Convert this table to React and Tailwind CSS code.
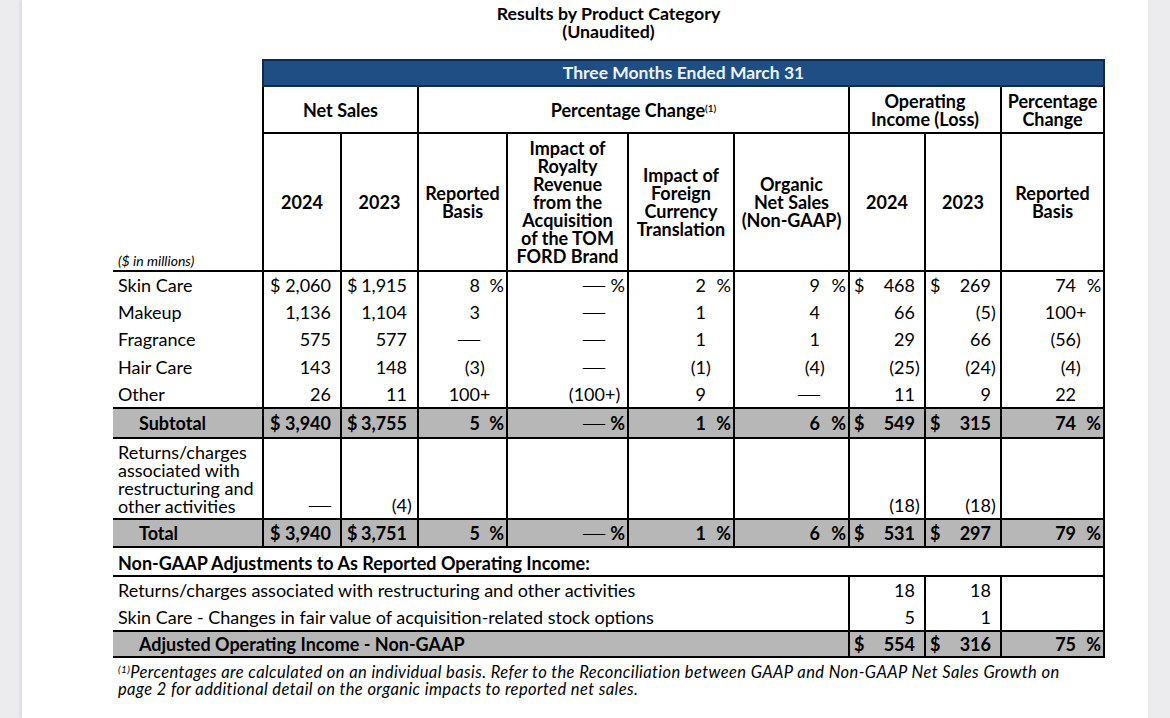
const COLS = [
  { w: 'w-[78px]', pl: 'pl-[6px]', pr: 'pr-[2px]', slot: 'w-[7px]' },
  { w: 'w-[77px]', pl: 'pl-[5px]', pr: 'pr-[3px]', slot: 'w-[7px]' },
  { w: 'w-[89px]', pl: 'pl-[2px]', pr: 'pr-[2px]', slot: 'w-[24px]' },
  { w: 'w-[121px]', pl: 'pl-[2px]', pr: 'pr-[2px]', slot: 'w-[20px]' },
  { w: 'w-[106px]', pl: 'pl-[2px]', pr: 'pr-[2px]', slot: 'w-[25px]' },
  { w: 'w-[115px]', pl: 'pl-[2px]', pr: 'pr-[2px]', slot: 'w-[26px]' },
  { w: 'w-[76px]', pl: 'pl-[4px]', pr: 'pr-[2px]', slot: 'w-[7px]' },
  { w: 'w-[76px]', pl: 'pl-[4px]', pr: 'pr-[2px]', slot: 'w-[7px]' },
  { w: 'w-[103px]', pl: 'pl-[2px]', pr: 'pr-[2px]', slot: 'w-[25px]' },
]

const rows = [
  ['Skin Care', ['$ 2,060', '$ 1,915', '8 %', '— %', '2 %', '9 %', '$ 468', '$ 269', '74 %']],
  ['Makeup', ['1,136', '1,104', '3', '—', '1', '4', '66', '(5)', '100+']],
  ['Fragrance', ['575', '577', '—', '—', '1', '1', '29', '66', '(56)']],
  ['Hair Care', ['143', '148', '(3)', '—', '(1)', '(4)', '(25)', '(24)', '(4)']],
  ['Other', ['26', '11', '100+', '(100+)', '9', '—', '11', '9', '22']],
]

const subtotal = ['$ 3,940', '$ 3,755', '5 %', '— %', '1 %', '6 %', '$ 549', '$ 315', '74 %']
const returns = ['—', '(4)', '', '', '', '', '(18)', '(18)', '']
const total = ['$ 3,940', '$ 3,751', '5 %', '— %', '1 %', '6 %', '$ 531', '$ 297', '79 %']

function parse(v) {
  let dollar = false
  let main = v
  let suf = ''
  let pct = false
  if (main.startsWith('$ ')) {
    dollar = true
    main = main.slice(2)
  }
  if (main.endsWith(' %')) {
    pct = true
    suf = '%'
    main = main.slice(0, -2)
  } else if (main.endsWith('+)')) {
    suf = '+)'
    main = main.slice(0, -2)
  } else if (main.endsWith(')')) {
    suf = ')'
    main = main.slice(0, -1)
  } else if (main.endsWith('+')) {
    suf = '+'
    main = main.slice(0, -1)
  }
  return { dollar, main, suf, pct }
}

function Num({ v, i, cls = '' }) {
  const col = COLS[i]
  const { dollar, main, suf, pct } = parse(v)
  return (
    <td className={`border-x-2 border-black ${col.pl} ${col.pr} ${cls}`}>
      <div className="flex items-baseline whitespace-nowrap">
        {dollar && <span>$</span>}
        {main === '—' ? (
          <span className="ml-auto font-['Liberation_Serif',serif] text-[22px] leading-[20px] font-normal">—</span>
        ) : (
          <span className="ml-auto">{main}</span>
        )}
        <span className={`inline-block ${col.slot} ${pct ? 'text-right' : 'text-left'}`}>{suf}</span>
      </div>
    </td>
  )
}

export default function App() {
  const head = 'border-2 border-black text-center font-bold text-[18px] leading-[18px] align-middle'
  const grey = 'bg-[#b7b7b7]'
  return (
    <div className="min-h-screen bg-[#ececef] font-['Lato',sans-serif] text-black">
      <div className="ml-[22px] w-[1126px] min-h-[718px] bg-white shadow-[-2px_0_4px_rgba(0,0,0,0.08)] pt-[4px] pb-4">
        <div className="ml-[91px] w-[991px]">
          <div className="text-center font-bold text-[17.8px] leading-[18px]">
            <div>Results by Product Category</div>
            <div>(Unaudited)</div>
          </div>

          <table className="mt-[19px] table-fixed border-collapse w-[991px] text-[18px] leading-[20px]">
            <colgroup>
              <col className="w-[150px]" />
              {COLS.map((c, i) => (
                <col key={i} className={c.w} />
              ))}
            </colgroup>
            <tbody>
              <tr>
                <td />
                <td colSpan={9} className="h-[26px] border-2 border-[#0f2c4d] bg-[#1e4e84] text-center font-bold text-[17.5px] text-[#eef3fa]">
                  Three Months Ended March 31
                </td>
              </tr>
              <tr>
                <td />
                <td colSpan={2} className={`${head} h-[47px]`}>Net Sales</td>
                <td colSpan={4} className={head}>
                  Percentage Change<sup className="text-[10px] font-semibold">(1)</sup>
                </td>
                <td colSpan={2} className={head}>Operating<br />Income (Loss)</td>
                <td className={head}>Percentage<br />Change</td>
              </tr>
              <tr>
                <td className="border-b-2 border-black align-bottom pl-[5px] pb-[1px] italic text-[14px] leading-[16px]">($ in millions)</td>
                <td className={`${head} h-[138px]`}>2024</td>
                <td className={head}>2023</td>
                <td className={head}>Reported<br />Basis</td>
                <td className={`${head} leading-[18.3px]`}>Impact of<br />Royalty<br />Revenue<br />from the<br />Acquisition<br />of the TOM<br />FORD Brand</td>
                <td className={head}>Impact of<br />Foreign<br />Currency<br />Translation</td>
                <td className={head}>Organic<br />Net Sales<br />(Non-GAAP)</td>
                <td className={head}>2024</td>
                <td className={head}>2023</td>
                <td className={head}>Reported<br />Basis</td>
              </tr>

              {rows.map(([label, vals]) => (
                <tr key={label} className="h-[27.4px]">
                  <td className="pl-[5px]">{label}</td>
                  {vals.map((v, i) => (
                    <Num key={i} v={v} i={i} />
                  ))}
                </tr>
              ))}

              <tr className={`h-[30px] ${grey} font-bold`}>
                <td className="border-y-2 border-black pl-[26px]">Subtotal</td>
                {subtotal.map((v, i) => (
                  <Num key={i} v={v} i={i} cls="border-y-2" />
                ))}
              </tr>

              <tr className="h-[81px]">
                <td className="pl-[5px] align-bottom pb-[3px] leading-[18px]">
                  Returns/charges<br />associated with<br />restructuring and<br />other activities
                </td>
                {returns.map((v, i) => (
                  <Num key={i} v={v} i={i} cls="align-bottom pb-[3px]" />
                ))}
              </tr>

              <tr className={`h-[28px] ${grey} font-bold`}>
                <td className="border-y-2 border-black pl-[26px]">Total</td>
                {total.map((v, i) => (
                  <Num key={i} v={v} i={i} cls="border-y-2" />
                ))}
              </tr>

              <tr className="h-[29px]">
                <td colSpan={10} className="border-r-2 border-b-2 border-black pl-[5px] pt-[3px] font-bold">
                  Non-GAAP Adjustments to As Reported Operating Income:
                </td>
              </tr>
              <tr className="h-[28px]">
                <td colSpan={7} className="pl-[5px] whitespace-nowrap">Returns/charges associated with restructuring and other activities</td>
                <Num v="18" i={6} />
                <Num v="18" i={7} />
                <Num v="" i={8} />
              </tr>
              <tr className="h-[27px]">
                <td colSpan={7} className="pl-[5px] whitespace-nowrap">Skin Care - Changes in fair value of acquisition-related stock options</td>
                <Num v="5" i={6} />
                <Num v="1" i={7} />
                <Num v="" i={8} />
              </tr>
              <tr className={`h-[26px] ${grey} font-bold`}>
                <td colSpan={7} className="border-y-2 border-black pl-[26px]">Adjusted Operating Income - Non-GAAP</td>
                <Num v="$ 554" i={6} cls="border-y-2" />
                <Num v="$ 316" i={7} cls="border-y-2" />
                <Num v="75 %" i={8} cls="border-y-2" />
              </tr>
            </tbody>
          </table>

          <p className="mt-[6px] pl-[5px] italic text-[16.5px] leading-[17px] tracking-[0.4px]">
            <sup className="text-[10px]">(1)</sup>Percentages are calculated on an individual basis. Refer to the Reconciliation between GAAP and Non-GAAP Net Sales Growth on
            <br />
            page 2 for additional detail on the organic impacts to reported net sales.
          </p>
        </div>
      </div>
    </div>
  )
}
